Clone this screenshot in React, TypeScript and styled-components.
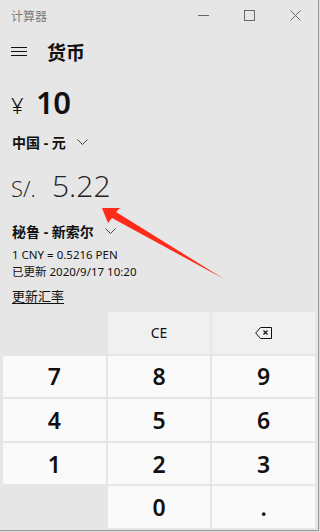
import { styled, createGlobalStyle } from "styled-components";

const GlobalStyle = createGlobalStyle`
  html, body {
    margin: 0;
    padding: 0;
    background: #dcdcdc;
  }
  body {
    font-family: "Noto Sans", "Noto Sans CJK SC", sans-serif;
  }
`;

const keys = [
  { label: "", kind: "empty" },
  { label: "CE", kind: "op" },
  { label: "back", kind: "op" },
  { label: "7", kind: "digit" },
  { label: "8", kind: "digit" },
  { label: "9", kind: "digit" },
  { label: "4", kind: "digit" },
  { label: "5", kind: "digit" },
  { label: "6", kind: "digit" },
  { label: "1", kind: "digit" },
  { label: "2", kind: "digit" },
  { label: "3", kind: "digit" },
  { label: "", kind: "empty" },
  { label: "0", kind: "digit" },
  { label: ".", kind: "digit" },
];

function BackspaceIcon() {
  return (
    <svg width="17" height="12" viewBox="0 0 17 12" fill="none">
      <path d="M5.5 0.5 H16.5 V11.5 H5.5 L0.7 6 Z" stroke="#111" strokeWidth="1" />
      <path d="M8.5 3.5 L12.5 7.5 M12.5 3.5 L8.5 7.5" stroke="#111" strokeWidth="1.1" />
    </svg>
  );
}

function Chevron() {
  return (
    <svg width="11" height="6" viewBox="0 0 11 6" fill="none">
      <path d="M0.5 0.5 L5.5 5.5 L10.5 0.5" stroke="#444" strokeWidth="1" />
    </svg>
  );
}

export default function App() {
  return (
    <>
      <GlobalStyle />
      <Window>
        <TitleBar>
          <Title>计算器</Title>
          <Controls>
            <Control>
              <svg width="11" height="11" viewBox="0 0 11 11">
                <path d="M0 5.5 H11" stroke="#666" strokeWidth="1" />
              </svg>
            </Control>
            <Control>
              <svg width="11" height="11" viewBox="0 0 11 11" fill="none">
                <rect x="0.5" y="0.5" width="10" height="10" stroke="#666" strokeWidth="1" />
              </svg>
            </Control>
            <Control>
              <svg width="11" height="11" viewBox="0 0 11 11">
                <path d="M0.5 0.5 L10.5 10.5 M10.5 0.5 L0.5 10.5" stroke="#666" strokeWidth="1" />
              </svg>
            </Control>
          </Controls>
        </TitleBar>

        <Header>
          <Burger>
            <span />
            <span />
            <span />
          </Burger>
          <Heading>货币</Heading>
        </Header>

        <AmountRow>
          <Symbol>¥</Symbol>
          <FromValue>10</FromValue>
        </AmountRow>
        <UnitPicker>
          中国 - 元 <Chevron />
        </UnitPicker>

        <ResultRow>
          <ResultSymbol>S/.</ResultSymbol>
          <ResultValue>5.22</ResultValue>
        </ResultRow>
        <UnitPicker $top={15}>
          秘鲁 - 新索尔 <Chevron />
        </UnitPicker>

        <RateInfo>
          <div>1 CNY = 0.5216 PEN</div>
          <div>已更新 2020/9/17 10:20</div>
        </RateInfo>
        <UpdateLink>更新汇率</UpdateLink>

        <Keypad>
          {keys.map((k, i) =>
            k.kind === "empty" ? (
              <Spacer key={i} />
            ) : (
              <Key key={i} $kind={k.kind}>
                {k.label === "back" ? <BackspaceIcon /> : k.label}
              </Key>
            )
          )}
        </Keypad>

        <Annotation width="130" height="80" viewBox="0 0 130 80">
          <path d="M2 13 L20 13 L16 17 L124 84 L12 23 L8 28 Z" fill="#ff2a1a" />
        </Annotation>
      </Window>
    </>
  );
}

const Window = styled.div`
  position: relative;
  width: 318px;
  height: 530px;
  background: #e6e6e6;
  border-right: 1px solid #9a9a9a;
  border-bottom: 1px solid #9a9a9a;
  overflow: hidden;
`;

const TitleBar = styled.div`
  height: 30px;
  display: flex;
  align-items: center;
  justify-content: space-between;
  padding-left: 11px;
`;

const Title = styled.span`
  font-size: 12px;
  color: #7a7a7a;
  font-family: "Noto Sans CJK SC", sans-serif;
`;

const Controls = styled.div`
  display: flex;
  align-items: center;
  height: 30px;
`;

const Control = styled.div`
  width: 46px;
  height: 30px;
  display: flex;
  align-items: center;
  justify-content: center;
`;

const Header = styled.div`
  height: 42px;
  display: flex;
  align-items: center;
  padding-left: 11px;
  gap: 20px;
`;

const Burger = styled.div`
  width: 16px;
  display: flex;
  flex-direction: column;
  gap: 3px;

  span {
    display: block;
    height: 1px;
    background: #111;
  }
`;

const Heading = styled.h1`
  margin: 0;
  font-size: 19px;
  font-weight: 700;
  color: #111;
  font-family: "Noto Sans CJK SC", sans-serif;
  line-height: 1;
`;

const AmountRow = styled.div`
  display: flex;
  align-items: baseline;
  padding-left: 11px;
  margin-top: 12px;
  height: 36px;
  color: #111;
`;

const Symbol = styled.span`
  font-size: 22px;
  font-weight: 300;
  width: 25px;
  line-height: 36px;
`;

const FromValue = styled.span`
  font-size: 31px;
  font-weight: 600;
  line-height: 36px;
  letter-spacing: -0.5px;
`;

const UnitPicker = styled.div<{ $top?: number }>`
  display: flex;
  align-items: center;
  gap: 8px;
  padding-left: 12px;
  margin-top: ${(p) => p.$top ?? 12}px;
  height: 20px;
  font-size: 14px;
  font-weight: 700;
  color: #111;
  font-family: "Noto Sans", "Noto Sans CJK SC", sans-serif;

  svg {
    margin-left: 3px;
  }
`;

const ResultRow = styled.div`
  display: flex;
  align-items: baseline;
  padding-left: 11px;
  margin-top: 14px;
  height: 40px;
  color: #222;
  font-family: "Open Sans", sans-serif;
`;

const ResultSymbol = styled.span`
  font-size: 22px;
  font-weight: 300;
  width: 41px;
  line-height: 40px;
`;

const ResultValue = styled.span`
  font-size: 30px;
  font-weight: 300;
  line-height: 40px;
`;

const RateInfo = styled.div`
  padding-left: 12px;
  margin-top: 5px;
  font-size: 11.5px;
  line-height: 17px;
  color: #111;
  font-family: "Noto Sans", "Noto Sans CJK SC", sans-serif;
`;

const UpdateLink = styled.div`
  padding-left: 12px;
  margin-top: 7px;
  font-size: 13px;
  line-height: 18px;
  color: #111;
  text-decoration: underline;
  text-underline-offset: 2px;
  font-family: "Noto Sans CJK SC", sans-serif;
`;

const Keypad = styled.div`
  position: absolute;
  left: 3px;
  right: 3px;
  top: 312px;
  display: grid;
  grid-template-columns: repeat(3, 1fr);
  grid-auto-rows: 41.6px;
  gap: 2px;
`;

const Spacer = styled.div``;

const Key = styled.div<{ $kind: string }>`
  display: flex;
  align-items: center;
  justify-content: center;
  background: ${(p) => (p.$kind === "op" ? "#f0f0f0" : "#fafafa")};
  color: #111;
  font-size: ${(p) => (p.$kind === "op" ? "14px" : "23px")};
  font-weight: ${(p) => (p.$kind === "op" ? 400 : 600)};
  font-family: "Noto Sans", sans-serif;
`;

const Annotation = styled.svg`
  position: absolute;
  left: 100px;
  top: 195px;
  overflow: visible;
  pointer-events: none;
`;
